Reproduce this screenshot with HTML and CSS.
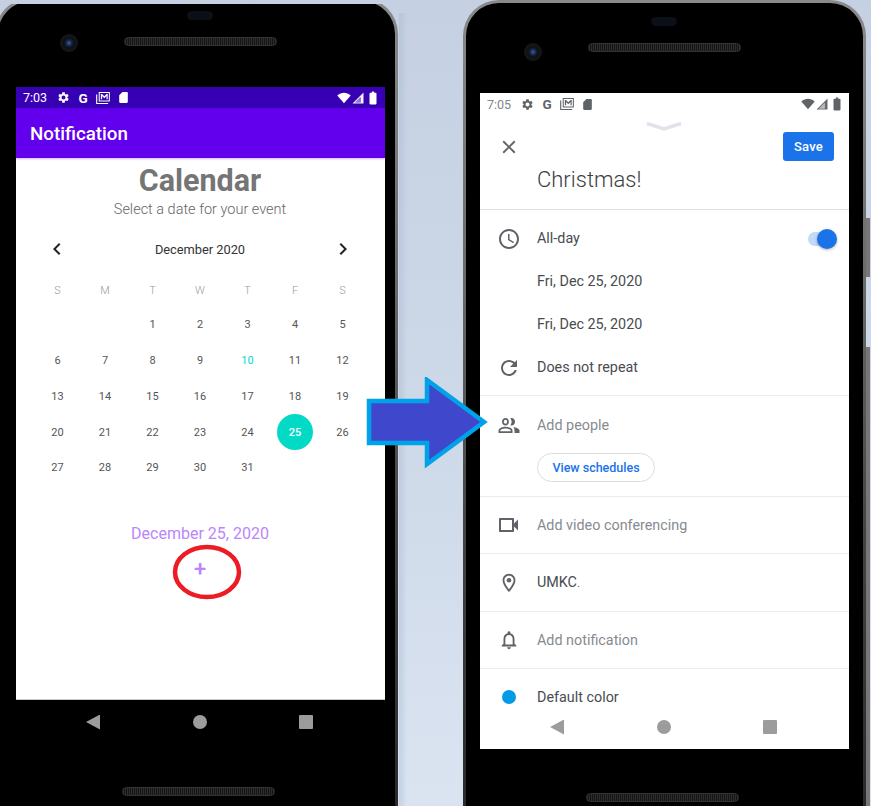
FILE: index.html
```html
<!DOCTYPE html>
<html lang="en">
<head>
<meta charset="utf-8">
<title>Calendar to Google Calendar event</title>
<link rel="stylesheet" href="styles.css">
</head>
<body>
<svg class="sprites" width="0" height="0" aria-hidden="true">
  <symbol id="i-gear" viewBox="0 0 24 24"><path d="M19.14 12.94c.04-.3.06-.61.06-.94 0-.32-.02-.64-.07-.94l2.03-1.58c.18-.14.23-.41.12-.61l-1.92-3.32c-.12-.22-.37-.29-.59-.22l-2.39.96c-.5-.38-1.03-.7-1.62-.94l-.36-2.54c-.04-.24-.24-.41-.48-.41h-3.84c-.24 0-.43.17-.47.41l-.36 2.54c-.59.24-1.13.57-1.62.94l-2.39-.96c-.22-.08-.47 0-.59.22L2.74 8.87c-.12.21-.08.47.12.61l2.03 1.58c-.05.3-.09.63-.09.94s.02.64.07.94l-2.03 1.58c-.18.14-.23.41-.12.61l1.92 3.32c.12.22.37.29.59.22l2.39-.96c.5.38 1.03.7 1.62.94l.36 2.54c.05.24.24.41.48.41h3.84c.24 0 .44-.17.47-.41l.36-2.54c.59-.24 1.13-.56 1.62-.94l2.39.96c.22.08.47 0 .59-.22l1.92-3.32c.12-.22.07-.47-.12-.61l-2.01-1.58zM12 15.6c-1.98 0-3.6-1.62-3.6-3.6s1.62-3.6 3.6-3.6 3.6 1.62 3.6 3.6-1.62 3.6-3.6 3.6z"/></symbol>
  <symbol id="i-photo" viewBox="0 0 16 14"><path fill-rule="evenodd" d="M3 0h13v11H3zM4.2 1.2v8.6h10.6V1.2z"/><path d="M5.5 8.5V2.2h1.3l2.7 2.9 2.7-2.9h1.3v6.3h-1.4V4.6L9.5 7.3 7 4.6v3.9z"/><path d="M0 3h1.3v9.7H14V14H0z"/></symbol>
  <symbol id="i-sd" viewBox="0 0 24 24"><path d="M18 2h-8L4.02 8 4 20c0 1.1.9 2 2 2h12c1.1 0 2-.9 2-2V4c0-1.1-.9-2-2-2z"/></symbol>
  <symbol id="i-wifi" viewBox="0 0 24 24"><path d="M12 21L.5 7.5C4 4.5 8 3 12 3s8 1.5 11.5 4.5z"/></symbol>
  <symbol id="i-signal" viewBox="0 0 24 24"><path fill-rule="evenodd" d="M1 23h22V1zM17 21H6l11-11z" opacity=".95"/><path d="M5 21h11V11l-11 10z" opacity=".45"/></symbol>
  <symbol id="i-battery" viewBox="0 0 24 24"><path d="M16.5 3H14V1h-4v2H7.500c-.7 0-1.500.6-1.500 1.400v17.200c0 .8.800 1.400 1.500 1.400h9c.7 0 1.500-.6 1.500-1.400V4.400C18 3.600 17.200 3 16.500 3z"/></symbol>
  <symbol id="i-close" viewBox="0 0 24 24"><path d="M19 6.410L17.590 5 12 10.590 6.410 5 5 6.410 10.590 12 5 17.590 6.410 19 12 13.410 17.590 19 19 17.590 13.410 12z"/></symbol>
  <symbol id="i-clock" viewBox="0 0 24 24"><path d="M11.990 2C6.470 2 2 6.480 2 12s4.470 10 9.990 10C17.520 22 22 17.520 22 12S17.520 2 11.990 2zM12 20c-4.420 0-8-3.580-8-8s3.580-8 8-8 8 3.580 8 8-3.580 8-8 8zm.5-13H11v6l5.250 3.150.75-1.230-4.500-2.670z"/></symbol>
  <symbol id="i-repeat" viewBox="0 0 24 24"><path d="M17.650 6.350C16.200 4.900 14.210 4 12 4c-4.420 0-7.990 3.580-7.990 8s3.570 8 7.990 8c3.730 0 6.840-2.550 7.730-6h-2.080c-.82 2.330-3.040 4-5.650 4-3.310 0-6-2.690-6-6s2.690-6 6-6c1.660 0 3.140.69 4.220 1.780L13 11h7V4l-2.350 2.350z"/></symbol>
  <symbol id="i-people" viewBox="0 0 24 24"><path d="M8.500 12.600c1.900 0 3.400-1.700 3.400-3.800S10.400 5 8.500 5 5 6.700 5 8.800s1.600 3.800 3.500 3.800zm0-5.800c1 0 1.600.9 1.600 2s-.6 2-1.600 2-1.700-.9-1.700-2 .7-2 1.700-2zM8.500 13.700c-2.800 0-7 1.400-7 3.700V20h14v-2.600c0-2.300-4.200-3.700-7-3.700zm5.200 4.500H3.300v-.8c0-.9 3-1.900 5.200-1.900s5.200 1 5.200 1.900z"/><path d="M13.300 5.200c.4-.1.800-.2 1.200-.2 2 0 3.500 1.700 3.500 3.800s-1.500 3.800-3.500 3.800c-.4 0-.8-.1-1.200-.2.8-1 1.300-2.200 1.300-3.600s-.5-2.600-1.300-3.600zM16.400 13.900c2.500.4 6.100 1.600 6.100 3.500V20h-5v-2.600c0-1.500-.4-2.600-1.100-3.500z"/></symbol>
  <symbol id="i-video" viewBox="0 0 24 24"><path d="M15 7v10H4V7h11m1-2H3c-.55 0-1 .45-1 1v12c0 .55.45 1 1 1h13c.55 0 1-.45 1-1v-4.500l4 4v-11l-4 4V6c0-.55-.45-1-1-1z"/></symbol>
  <symbol id="i-place" viewBox="0 0 24 24"><path d="M12 2C8.130 2 5 5.130 5 9c0 5.250 7 13 7 13s7-7.750 7-13c0-3.870-3.130-7-7-7zM7 9c0-2.760 2.240-5 5-5s5 2.240 5 5c0 2.880-2.880 7.190-5 9.880C9.920 16.210 7 11.850 7 9z"/><circle cx="12" cy="9" r="2.500"/></symbol>
  <symbol id="i-bell" viewBox="0 0 24 24"><path d="M12 22c1.100 0 2-.9 2-2h-4c0 1.100.9 2 2 2zm6-6v-5c0-3.070-1.630-5.640-4.500-6.320V4c0-.83-.67-1.500-1.500-1.500s-1.500.67-1.500 1.500v.68C7.640 5.360 6 7.920 6 11v5l-2 2v1h16v-1l-2-2zm-2 1H8v-6c0-2.480 1.510-4.500 4-4.500s4 2.020 4 4.500v6z"/></symbol>
  <symbol id="i-chev-left" viewBox="0 0 24 24"><path d="M15.410 7.410L14 6l-6 6 6 6 1.410-1.410L10.830 12z"/></symbol>
  <symbol id="i-chev-right" viewBox="0 0 24 24"><path d="M8.590 16.590L10 18l6-6-6-6-1.410 1.410L13.170 12z"/></symbol>
</svg>

<main class="canvas">
  <div class="strip"></div>

  <section class="phone phone-left">
    <div class="oval"></div>
    <div class="camera"></div>
    <div class="speaker speaker-top"></div>
    <div class="screen screen-left">
      <div class="status status-dark">
        <span class="time">7:03</span>
        <svg class="st"><use href="#i-gear"/></svg>
        <span class="g">G</span>
        <svg class="st-photo"><use href="#i-photo"/></svg>
        <svg class="st"><use href="#i-sd"/></svg>
        <span class="spacer"></span>
        <svg class="st st-wifi"><use href="#i-wifi"/></svg>
        <svg class="st st-signal"><use href="#i-signal"/></svg>
        <svg class="st st-batt"><use href="#i-battery"/></svg>
      </div>
      <header class="appbar">Notification</header>
      <div class="cal-page">
        <h1 class="cal-title">Calendar</h1>
        <p class="cal-sub">Select a date for your event</p>
        <div class="month">
          <svg class="chev"><use href="#i-chev-left"/></svg>
          <span class="month-name">December 2020</span>
          <svg class="chev"><use href="#i-chev-right"/></svg>
        </div>
        <div class="days">
          <span class="dow">S</span><span class="dow">M</span><span class="dow">T</span><span class="dow">W</span><span class="dow">T</span><span class="dow">F</span><span class="dow">S</span>
          <span class="day"></span><span class="day"></span>
          <span class="day">1</span><span class="day">2</span><span class="day">3</span><span class="day">4</span><span class="day">5</span>
          <span class="day">6</span><span class="day">7</span><span class="day">8</span><span class="day">9</span><span class="day today">10</span><span class="day">11</span><span class="day">12</span>
          <span class="day">13</span><span class="day">14</span><span class="day">15</span><span class="day">16</span><span class="day">17</span><span class="day">18</span><span class="day">19</span>
          <span class="day">20</span><span class="day">21</span><span class="day">22</span><span class="day">23</span><span class="day">24</span><span class="day"><span class="picked">25</span></span><span class="day">26</span>
          <span class="day">27</span><span class="day">28</span><span class="day">29</span><span class="day">30</span><span class="day">31</span>
        </div>
        <p class="picked-date">December 25, 2020</p>
        <p class="add">+</p>
      </div>
    </div>
    <div class="nav">
      <span class="nav-back"></span><span class="nav-home"></span><span class="nav-square"></span>
    </div>
    <div class="speaker speaker-bottom"></div>
  </section>

  <section class="phone phone-right">
    <div class="oval"></div>
    <div class="camera"></div>
    <div class="speaker speaker-top"></div>
    <div class="side-btn side-btn-a"></div>
    <div class="side-btn side-btn-b"></div>
    <div class="screen screen-right">
      <div class="status status-light">
        <span class="time">7:05</span>
        <svg class="st"><use href="#i-gear"/></svg>
        <span class="g">G</span>
        <svg class="st-photo"><use href="#i-photo"/></svg>
        <svg class="st"><use href="#i-sd"/></svg>
        <span class="spacer"></span>
        <svg class="st st-wifi"><use href="#i-wifi"/></svg>
        <svg class="st st-signal"><use href="#i-signal"/></svg>
        <svg class="st st-batt"><use href="#i-battery"/></svg>
      </div>
      <div class="handle">
        <svg width="38" height="10" viewBox="0 0 38 10"><path d="M2 2.500L19 8l17-5.500" fill="none" stroke="#e0e3ea" stroke-width="3.500"/></svg>
      </div>
      <div class="edit-head">
        <svg class="ico ico-sm"><use href="#i-close"/></svg>
        <button class="save">Save</button>
      </div>
      <div class="title-row">Christmas!</div>

      <div class="group group-time">
        <div class="row">
          <svg class="ico"><use href="#i-clock"/></svg>
          <span class="txt">All-day</span>
          <span class="toggle"><span class="knob"></span></span>
        </div>
        <div class="row"><span class="ico"></span><span class="txt">Fri, Dec 25, 2020</span></div>
        <div class="row"><span class="ico"></span><span class="txt">Fri, Dec 25, 2020</span></div>
        <div class="row">
          <svg class="ico"><use href="#i-repeat"/></svg>
          <span class="txt">Does not repeat</span>
        </div>
      </div>

      <div class="group group-people">
        <div class="row row-people">
          <svg class="ico"><use href="#i-people"/></svg>
          <span class="txt muted">Add people</span>
        </div>
        <button class="schedules">View schedules</button>
      </div>

      <div class="group row row-single">
        <svg class="ico"><use href="#i-video"/></svg>
        <span class="txt muted">Add video conferencing</span>
      </div>
      <div class="group row row-single row-wide">
        <svg class="ico ico-sm"><use href="#i-place"/></svg>
        <span class="txt">UMKC<span class="dot">.</span></span>
      </div>
      <div class="group row row-single">
        <svg class="ico ico-sm"><use href="#i-bell"/></svg>
        <span class="txt muted">Add notification</span>
      </div>
      <div class="row row-color">
        <span class="ico ico-dot"><span class="color-dot"></span></span>
        <span class="txt">Default color</span>
      </div>
      <div class="nav nav-light">
        <span class="nav-back"></span><span class="nav-home"></span><span class="nav-square"></span>
      </div>
    </div>
    <div class="speaker speaker-bottom"></div>
  </section>

  <svg class="annot annot-arrow" width="126" height="92" viewBox="0 0 126 92">
    <path d="M3 24H61V3L118 45 61 87V66H3z" fill="#3f48cc" stroke="#00a2e8" stroke-width="4.500"/>
  </svg>
  <svg class="annot annot-ring" width="72" height="58" viewBox="0 0 72 58">
    <ellipse cx="36" cy="29" rx="32" ry="25" fill="none" stroke="#ed1c24" stroke-width="4.500"/>
  </svg>
</main>
</body>
</html>
```
FILE: styles.css
```css
* { box-sizing: border-box; }
html, body { margin: 0; padding: 0; }
body {
  font-family: Roboto, "Liberation Sans", sans-serif;
  background: #ccd7e7;
  overflow: hidden;
}
.sprites { position: absolute; }
p, h1 { margin: 0; }
button { font-family: inherit; cursor: pointer; }

.canvas {
  position: relative;
  width: 871px;
  height: 806px;
  overflow: hidden;
  background: linear-gradient(180deg, #c5d0e2 0%, #cdd8e8 50%, #dae4f1 100%);
}
.strip {
  position: absolute;
  left: 399px;
  top: 13px;
  width: 8px;
  height: 793px;
  background: linear-gradient(90deg, rgba(160, 180, 205, .4), rgba(160, 180, 205, 0));
}

/* phone bodies */
.phone {
  position: absolute;
  border-radius: 36px 36px 0 0;
  border: 3px solid transparent;
  border-bottom: 0;
  background:
    linear-gradient(#000, #000) padding-box,
    linear-gradient(180deg, #8a8a8a 0, #6a6a6a 35%, #444 65%, #2a2a2a 100%) border-box;
}
.phone-left {
  left: -5px;
  top: -2px;
  width: 403px;
  height: 808px;
  padding: 86px 0 0 18px;
  clip-path: inset(6px -2px 0 -2px);
}
.phone-right {
  left: 463px;
  top: 0;
  width: 403px;
  height: 806px;
  padding: 90px 0 0 14px;
}
.oval {
  position: absolute;
  width: 26px;
  height: 9px;
  border-radius: 5px;
  background: #0b0f18;
}
.phone-left .oval { left: 189px; top: 10px; }
.phone-right .oval { left: 185px; top: 14px; }
.camera {
  position: absolute;
  width: 18px;
  height: 18px;
  border-radius: 50%;
  background: radial-gradient(circle at 50% 50%, #3d5fb0 0, #18264a 22%, #0e1014 38%, #1b1d21 100%);
}
.phone-left .camera { left: 62px; top: 33px; }
.phone-right .camera { left: 58px; top: 40px; }
.speaker {
  position: absolute;
  width: 153px;
  height: 9px;
  border-radius: 5px;
  background: repeating-linear-gradient(90deg, #2d2d2d 0 1px, #151515 1px 2px);
  border: 1px solid #333;
}
.phone-left .speaker-top { left: 126px; top: 36px; }
.phone-right .speaker-top { left: 122px; top: 40px; }
.phone-left .speaker-bottom { left: 124px; top: 786px; }
.phone-right .speaker-bottom { left: 120px; top: 790px; }
.side-btn {
  position: absolute;
  left: 400px;
  width: 4px;
  background: #777;
}
.side-btn-a { top: 215px; height: 59px; }
.side-btn-b { top: 344px; height: 462px; }

/* screens */
.screen { width: 369px; background: #fff; overflow: hidden; }
.screen-left { height: 613px; border-bottom: 1px solid #c9c9c9; }
.screen-right { height: 656px; }

.status {
  height: 21px;
  display: flex;
  align-items: center;
  gap: 7px;
  padding: 0 8px 0 7px;
}
.status-dark { background: #3700b3; color: #fff; fill: #fff; }
.status-light { height: 22px; color: #80868b; fill: #5f6368; }
.status .time { font-size: 12.500px; margin-right: 2px; width: 25px; }
.status-light .time { color: #80868b; }
.status .g { font-size: 13.500px; font-weight: 700; width: 12px; text-align: center; }
.status-light .g { color: #5f6368; }
.st { width: 13px; height: 13px; }
.st-photo { width: 14px; height: 12px; }
.spacer { flex: 1; }
.st-wifi { width: 14px; height: 14px; margin-right: -6px; }
.st-signal { width: 12px; height: 12px; margin-right: -5px; }
.st-batt { width: 14px; height: 14px; margin-right: -3px; }

.appbar {
  height: 50px;
  background: #6200ee;
  color: #fff;
  font-size: 18.750px;
  font-weight: 500;
  line-height: 52px;
  padding-left: 14px;
  box-shadow: 0 1px 2px rgba(98, 0, 238, .3);
  position: relative;
}

/* calendar */
.cal-page { display: flex; flex-direction: column; align-items: center; padding-right: 1px; }
.cal-title {
  margin-top: 4px;
  font-size: 30.500px;
  font-weight: 700;
  line-height: 38px;
  color: #757575;
}
.cal-sub {
  font-size: 14.500px;
  font-weight: 300;
  line-height: 20px;
  color: #666;
}
.month {
  margin-top: 13px;
  width: 311px;
  height: 32px;
  display: flex;
  align-items: center;
  justify-content: space-between;
}
.chev { width: 24px; height: 24px; fill: #222; }
.month-name { font-size: 12.800px; color: #333; }
.days {
  margin-top: 8px;
  display: grid;
  grid-template-columns: repeat(7, 47.500px);
  grid-template-rows: 34px repeat(5, 35.750px);
  justify-content: center;
}
.dow, .day {
  display: flex;
  align-items: center;
  justify-content: center;
  font-size: 11px;
}
.dow { color: #9a9a9a; font-weight: 300; }
.day { color: #555; }
.today { color: #03dac5; }
.picked {
  width: 36px;
  height: 36px;
  border-radius: 50%;
  background: #03dac5;
  color: #fff;
  display: flex;
  align-items: center;
  justify-content: center;
  font-weight: 500;
}
.picked-date {
  margin-top: 38px;
  font-size: 16px;
  line-height: 20px;
  color: #bb86fc;
}
.add {
  margin-top: 13px;
  font-size: 22px;
  font-weight: 500;
  line-height: 24px;
  color: #bb86fc;
}

/* nav bars */
.nav {
  height: 44px;
  display: flex;
  align-items: center;
  justify-content: center;
  gap: 92.500px;
  width: 369px;
  padding-right: 2px;
}
.nav-back {
  width: 14px;
  height: 15px;
  background: #9c9c9c;
  clip-path: polygon(100% 0, 100% 100%, 0 50%);
}
.nav-home { width: 14px; height: 14px; border-radius: 50%; background: #9c9c9c; }
.nav-square { width: 14px; height: 14px; border-radius: 1px; background: #9c9c9c; }

/* event editor */
.handle { height: 15px; display: flex; align-items: flex-start; justify-content: center; padding: 6px 2px 0 0; }
.edit-head {
  height: 29px;
  margin-top: 2px;
  padding: 0 15px 0 19px;
  display: flex;
  align-items: center;
  justify-content: space-between;
}
.save {
  width: 51px;
  height: 29px;
  border: 0;
  border-radius: 3px;
  background: #1a73e8;
  color: #fff;
  font-size: 13px;
  font-weight: 500;
  letter-spacing: .2px;
  padding: 0;
}
.ico { width: 24px; height: 24px; margin: 0 -2px; fill: #5f6368; flex: none; display: block; }
.ico-sm { width: 22px; height: 22px; margin: 0 -1px; }
.title-row {
  height: 49px;
  padding: 0 0 12px 57px;
  display: flex;
  align-items: center;
  font-size: 22px;
  font-weight: 300;
  color: #3c4043;
  border-bottom: 1px solid #e0e0e0;
}
.group { border-bottom: 1px solid #ebebeb; }
.group-time { padding: 7px 0 6px; }
.row {
  display: flex;
  align-items: center;
  height: 43px;
  padding: 0 13px 0 19px;
  gap: 18px;
}
.txt { font-size: 14.350px; color: #484c50; }
.muted { color: #868b90; }
.dot { font-weight: 300; }
.toggle {
  position: relative;
  margin-left: auto;
  width: 28px;
  height: 14px;
  border-radius: 7px;
  background: #c3d9f8;
}
.knob {
  position: absolute;
  right: -1px;
  top: -3px;
  width: 20px;
  height: 20px;
  border-radius: 50%;
  background: #1a73e8;
  box-shadow: 0 1px 3px rgba(0, 0, 0, .3);
}
.group-people { height: 101px; padding-top: 14px; }
.row-people { height: 30px; }
.schedules {
  display: block;
  margin: 13px 0 0 57px;
  width: 118px;
  height: 29px;
  border: 1px solid #dadce0;
  border-radius: 15px;
  background: #fff;
  color: #1a73e8;
  font-size: 12.500px;
  font-weight: 500;
  padding: 0;
}
.row-single { height: 57px; }
.row-wide { height: 58px; }
.row-color { height: 36px; padding-top: 20px; }
.ico-dot { display: flex; align-items: center; justify-content: center; }
.color-dot { width: 14px; height: 14px; border-radius: 50%; background: #039be5; }
.nav-light { background: #fff; }

/* annotations drawn on top of the screenshot */
.annot { position: absolute; }
.annot-arrow { left: 366px; top: 377px; }
.annot-ring { left: 171px; top: 543px; }
```
